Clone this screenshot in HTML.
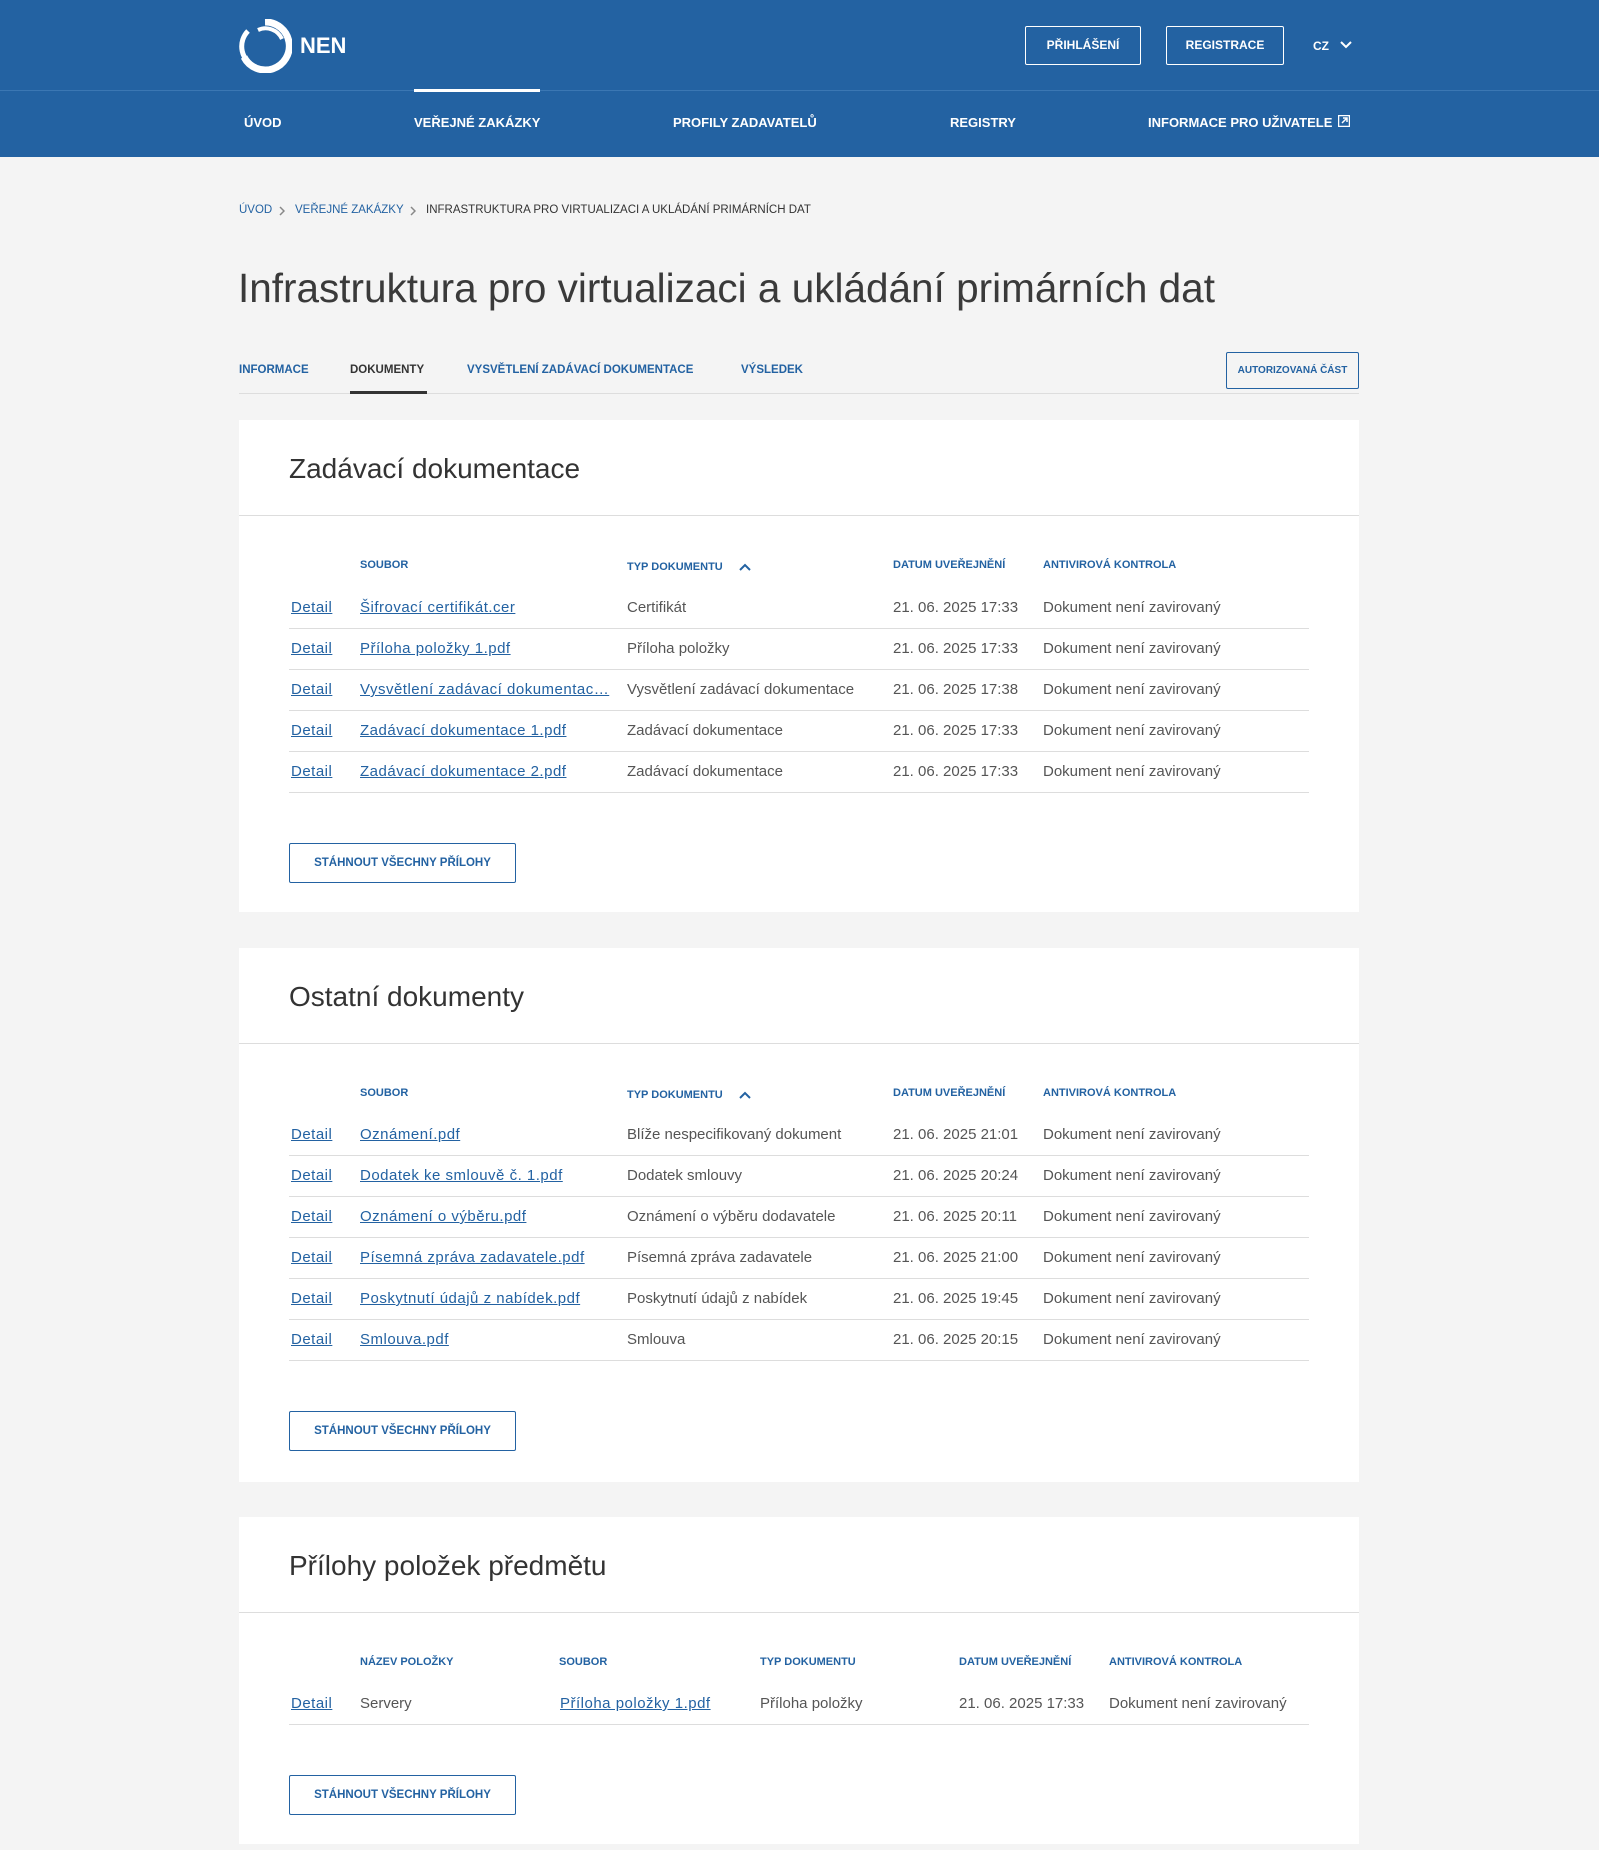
<!DOCTYPE html>
<html><head><meta charset="utf-8"><style>
*{margin:0;padding:0;box-sizing:border-box}
body{width:1599px;height:1850px;background:#f4f4f4;font-family:"Liberation Sans",Arial,sans-serif;color:#555;position:relative;overflow:hidden}
.a{position:absolute;white-space:nowrap}
.top{position:absolute;left:0;top:0;width:1599px;height:157px;background:#2362a2}
.hl{position:absolute;left:0;top:90px;width:1599px;height:1px;background:#3b77b3}
.btn{position:absolute;border:1px solid #fff;color:#fff;font-size:12px;font-weight:bold;text-align:center;line-height:37px;border-radius:2px}
.nav{position:absolute;top:115px;color:#fff;font-size:13px;font-weight:bold}
.bc{font-size:11.5px;top:204px}
.tab{position:absolute;top:364px;font-size:11.5px;font-weight:bold;color:#2362a2}
.card{position:absolute;left:239px;width:1120px;background:#fff}
.card h2{position:absolute;left:50px;top:33px;font-size:28px;font-weight:normal;color:#333}
.card .dv{position:absolute;left:0;top:95px;width:1120px;height:1px;background:#ddd}
.th{position:absolute;top:139px;font-size:11px;font-weight:bold;color:#2362a2}
.row{position:absolute;left:50px;width:1020px;height:41px;border-bottom:1px solid #ddd;font-size:15px;line-height:40px}
.row span{position:absolute;white-space:nowrap}
.row a{color:#2362a2;text-decoration:underline;letter-spacing:.5px}
.dl{position:absolute;left:50px;width:227px;height:40px;border:1px solid #2362a2;border-radius:2px;color:#2362a2;font-size:11.5px;font-weight:bold;text-align:center;line-height:38px}
.sort{position:absolute;top:143px;left:500px}
</style></head><body>
<div class="top"></div><div class="hl"></div>
<svg class="a" style="left:238px;top:19px" width="54" height="54" viewBox="0 0 54 54">
<path d="M27 3 A24 24 0 1 1 6 38" fill="none" stroke="#fff" stroke-width="7"/>
<path d="M10 12 A22 22 0 0 0 18 48" fill="none" stroke="#fff" stroke-width="5"/>
<path d="M44 20 A18 18 0 0 0 20 11" fill="none" stroke="#fff" stroke-width="4"/>
</svg>
<div class="a" style="left:300px;top:33px;color:#fff;font-size:22px;font-weight:bold">NEN</div>
<div class="btn" style="left:1025px;top:26px;width:116px;height:39px">PŘIHLÁŠENÍ</div>
<div class="btn" style="left:1166px;top:26px;width:118px;height:39px">REGISTRACE</div>
<div class="a" style="left:1313px;top:39px;color:#fff;font-size:12px;font-weight:bold">CZ</div>
<svg class="a" style="left:1340px;top:41px" width="12" height="8"><path d="M1 1 L6 6 L11 1" stroke="#fff" stroke-width="2" fill="none"/></svg>
<div class="nav" style="left:244px">ÚVOD</div>
<div class="nav" style="left:414px">VEŘEJNÉ ZAKÁZKY</div>
<div class="a" style="left:414px;top:89px;width:126px;height:3px;background:#fff"></div>
<div class="nav" style="left:673px">PROFILY ZADAVATELŮ</div>
<div class="nav" style="left:950px">REGISTRY</div>
<div class="nav" style="left:1148px">INFORMACE PRO UŽIVATELE</div>
<svg class="a" style="left:1338px;top:115px" width="12" height="12"><rect x="0.5" y="0.5" width="11" height="11" fill="none" stroke="#fff" stroke-width="1.5"/><path d="M4 8 L9 3 M5 3 H9 V7" stroke="#fff" stroke-width="1.5" fill="none"/></svg>

<div class="a bc" style="left:239px;color:#2362a2">ÚVOD</div>
<svg class="a" style="left:279px;top:206px" width="6" height="10"><path d="M1 1 L5 5 L1 9" stroke="#888" stroke-width="1.5" fill="none"/></svg>
<div class="a bc" style="left:295px;color:#2362a2">VEŘEJNÉ ZAKÁZKY</div>
<svg class="a" style="left:410px;top:206px" width="6" height="10"><path d="M1 1 L5 5 L1 9" stroke="#888" stroke-width="1.5" fill="none"/></svg>
<div class="a bc" style="left:426px;color:#333">INFRASTRUKTURA PRO VIRTUALIZACI A UKLÁDÁNÍ PRIMÁRNÍCH DAT</div>
<div class="a" style="left:238px;top:265px;font-size:40.5px;color:#3a3a3a;font-weight:300">Infrastruktura pro virtualizaci a ukládání primárních dat</div>

<div class="tab" style="left:239px">INFORMACE</div>
<div class="tab" style="left:350px;color:#333">DOKUMENTY</div>
<div class="tab" style="left:467px">VYSVĚTLENÍ ZADÁVACÍ DOKUMENTACE</div>
<div class="tab" style="left:741px">VÝSLEDEK</div>
<div class="a" style="left:239px;top:393px;width:1120px;height:1px;background:#ddd"></div>
<div class="a" style="left:350px;top:391px;width:77px;height:3px;background:#333"></div>
<div class="a" style="left:1226px;top:352px;width:133px;height:37px;border:1px solid #2362a2;border-radius:2px;color:#2362a2;font-size:10px;font-weight:bold;text-align:center;line-height:35px">AUTORIZOVANÁ ČÁST</div>

<div class="card" style="top:420px;height:492px">
<h2>Zadávací dokumentace</h2><div class="dv"></div>
<div class="th" style="left:121px">SOUBOR</div>
<div class="th" style="left:388px;top:141px">TYP DOKUMENTU</div>
<svg class="sort" width="12" height="8"><path d="M1 7 L6 2 L11 7" stroke="#2362a2" stroke-width="2" fill="none"/></svg>
<div class="th" style="left:654px">DATUM UVEŘEJNĚNÍ</div>
<div class="th" style="left:804px">ANTIVIROVÁ KONTROLA</div>
<div class="row" style="top:168px"><span style="left:2px"><a>Detail</a></span><span style="left:71px"><a>Šifrovací certifikát.cer</a></span><span style="left:338px">Certifikát</span><span style="left:604px">21. 06. 2025 17:33</span><span style="left:754px">Dokument není zavirovaný</span></div>
<div class="row" style="top:209px"><span style="left:2px"><a>Detail</a></span><span style="left:71px"><a>Příloha položky 1.pdf</a></span><span style="left:338px">Příloha položky</span><span style="left:604px">21. 06. 2025 17:33</span><span style="left:754px">Dokument není zavirovaný</span></div>
<div class="row" style="top:250px"><span style="left:2px"><a>Detail</a></span><span style="left:71px"><a>Vysvětlení zadávací dokumentac…</a></span><span style="left:338px">Vysvětlení zadávací dokumentace</span><span style="left:604px">21. 06. 2025 17:38</span><span style="left:754px">Dokument není zavirovaný</span></div>
<div class="row" style="top:291px"><span style="left:2px"><a>Detail</a></span><span style="left:71px"><a>Zadávací dokumentace 1.pdf</a></span><span style="left:338px">Zadávací dokumentace</span><span style="left:604px">21. 06. 2025 17:33</span><span style="left:754px">Dokument není zavirovaný</span></div>
<div class="row" style="top:332px"><span style="left:2px"><a>Detail</a></span><span style="left:71px"><a>Zadávací dokumentace 2.pdf</a></span><span style="left:338px">Zadávací dokumentace</span><span style="left:604px">21. 06. 2025 17:33</span><span style="left:754px">Dokument není zavirovaný</span></div>
<div class="dl" style="top:423px">STÁHNOUT VŠECHNY PŘÍLOHY</div>
</div>

<div class="card" style="top:948px;height:534px">
<h2>Ostatní dokumenty</h2><div class="dv"></div>
<div class="th" style="left:121px">SOUBOR</div>
<div class="th" style="left:388px;top:141px">TYP DOKUMENTU</div>
<svg class="sort" width="12" height="8"><path d="M1 7 L6 2 L11 7" stroke="#2362a2" stroke-width="2" fill="none"/></svg>
<div class="th" style="left:654px">DATUM UVEŘEJNĚNÍ</div>
<div class="th" style="left:804px">ANTIVIROVÁ KONTROLA</div>
<div class="row" style="top:167px"><span style="left:2px"><a>Detail</a></span><span style="left:71px"><a>Oznámení.pdf</a></span><span style="left:338px">Blíže nespecifikovaný dokument</span><span style="left:604px">21. 06. 2025 21:01</span><span style="left:754px">Dokument není zavirovaný</span></div>
<div class="row" style="top:208px"><span style="left:2px"><a>Detail</a></span><span style="left:71px"><a>Dodatek ke smlouvě č. 1.pdf</a></span><span style="left:338px">Dodatek smlouvy</span><span style="left:604px">21. 06. 2025 20:24</span><span style="left:754px">Dokument není zavirovaný</span></div>
<div class="row" style="top:249px"><span style="left:2px"><a>Detail</a></span><span style="left:71px"><a>Oznámení o výběru.pdf</a></span><span style="left:338px">Oznámení o výběru dodavatele</span><span style="left:604px">21. 06. 2025 20:11</span><span style="left:754px">Dokument není zavirovaný</span></div>
<div class="row" style="top:290px"><span style="left:2px"><a>Detail</a></span><span style="left:71px"><a>Písemná zpráva zadavatele.pdf</a></span><span style="left:338px">Písemná zpráva zadavatele</span><span style="left:604px">21. 06. 2025 21:00</span><span style="left:754px">Dokument není zavirovaný</span></div>
<div class="row" style="top:331px"><span style="left:2px"><a>Detail</a></span><span style="left:71px"><a>Poskytnutí údajů z nabídek.pdf</a></span><span style="left:338px">Poskytnutí údajů z nabídek</span><span style="left:604px">21. 06. 2025 19:45</span><span style="left:754px">Dokument není zavirovaný</span></div>
<div class="row" style="top:372px"><span style="left:2px"><a>Detail</a></span><span style="left:71px"><a>Smlouva.pdf</a></span><span style="left:338px">Smlouva</span><span style="left:604px">21. 06. 2025 20:15</span><span style="left:754px">Dokument není zavirovaný</span></div>
<div class="dl" style="top:463px">STÁHNOUT VŠECHNY PŘÍLOHY</div>
</div>

<div class="card" style="top:1517px;height:327px">
<h2>Přílohy položek předmětu</h2><div class="dv"></div>
<div class="th" style="left:121px">NÁZEV POLOŽKY</div>
<div class="th" style="left:320px">SOUBOR</div>
<div class="th" style="left:521px">TYP DOKUMENTU</div>
<div class="th" style="left:720px">DATUM UVEŘEJNĚNÍ</div>
<div class="th" style="left:870px">ANTIVIROVÁ KONTROLA</div>
<div class="row" style="top:167px"><span style="left:2px"><a>Detail</a></span><span style="left:71px">Servery</span><span style="left:271px"><a>Příloha položky 1.pdf</a></span><span style="left:471px">Příloha položky</span><span style="left:670px">21. 06. 2025 17:33</span><span style="left:820px">Dokument není zavirovaný</span></div>
<div class="dl" style="top:258px">STÁHNOUT VŠECHNY PŘÍLOHY</div>
</div>
</body></html>
